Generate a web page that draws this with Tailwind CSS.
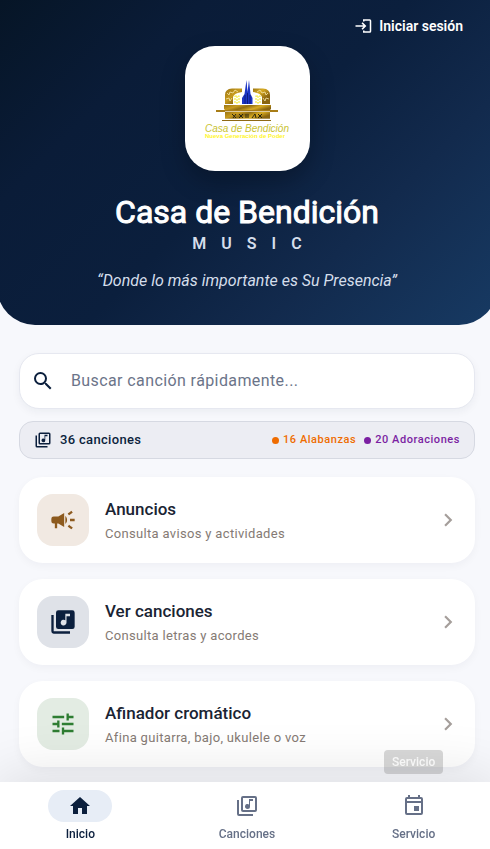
<!DOCTYPE html>
<html lang="es">
<head>
    <meta charset="UTF-8">
    <meta name="viewport" content="width=device-width, initial-scale=1.0">
    <title>Casa de Bendición Music</title>
    <script src="https://cdn.jsdelivr.net/npm/@tailwindcss/browser@4"></script>
</head>
<body class="bg-[#f7f8fc] font-['Roboto',sans-serif] overflow-x-clip">
    <div class="-ml-[3px] -mr-[7px] min-h-screen flex flex-col">
        <header class="flex flex-col items-center rounded-b-[38px] bg-linear-[135deg,#061526_0%,#0a1c38_25%,#0b1f3d_50%,#122a4d_72%,#173a63_100%] pt-3.5 pb-[34px] text-white">
            <button type="button" class="self-end mr-[34px] mb-2 h-6 flex items-center gap-[7px] text-sm font-semibold">
                <svg class="size-[18px]" viewBox="0 0 24 24" fill="currentColor"><path d="M12 3h9a2 2 0 0 1 2 2v14a2 2 0 0 1-2 2h-9v-3h2v1h7V5h-7v1h-2z"/><path d="M11.500 7 10 8.500l2.500 2.500H2v2h10.500L10 15.500l1.500 1.500 5-5z"/></svg>
                Iniciar sesión
            </button>
            <div class="size-[125px] rounded-[30px] bg-white shadow-[0_10px_24px_rgba(0,0,0,0.25)] flex items-center justify-center">
                <svg class="w-[94px] h-[66px]" viewBox="0 0 94 66">
                    <defs>
                        <linearGradient id="gold" x1="0" x2="1" y1="0" y2="0.4">
                            <stop offset="0" stop-color="#9a7413"/>
                            <stop offset="0.3" stop-color="#c79a1d"/>
                            <stop offset="0.5" stop-color="#8f6c10"/>
                            <stop offset="0.75" stop-color="#d8ab22"/>
                            <stop offset="1" stop-color="#8a6510"/>
                        </linearGradient>
                    </defs>
                    <path d="M25 28V19Q25 13 32 12.500H42V16Q34 17 33 21V28ZM70 28V19Q70 13 63 12.500H53V16Q61 17 62 21V28Z" fill="url(#gold)"/>
                    <path d="M27 17l2 2 1-3 3 1 2-3 3 2M26 23l3-1 1 3 2-3M68 17l-2 2-1-3-3 1-2-3-3 2M69 23l-3-1-1 3-2-3" fill="none" stroke="#f5e6ac" stroke-width="0.800"/>
                    <path d="M35 20h4v7h-4zM37 20v7M56 20h4v7h-4zM58 20v7" fill="none" stroke="#f6ee45" stroke-width="1.200" stroke-dasharray="2 1"/>
                    <path d="M42 28V22L44.500 18 46.500 4l1 12L49 4l1.500 14 2 4v6z" fill="#1c35c4"/>
                    <path d="M45 28v-9M50 28v-9M47.500 28V17" stroke="#0a166e" stroke-width="0.800"/>
                    <path d="M24 29h47v4l-2 2H26l-2-2z" fill="url(#gold)"/>
                    <path d="M16 34h62v2H16z" fill="#a87d17"/>
                    <path d="M25 36h45v7H25z" fill="url(#gold)"/>
                    <path d="M25 35.500h45M23 43h49" stroke="#fff" stroke-width="0.600"/>
                    <path d="M22 44h49v1H22z" fill="#8e6914"/>
                    <path d="M32 38l4 4m0-4-3 4M39 38l4 4m0-4-4 4M46 38v4m2-4v4M52 42l3-4 1 4M58 38l4 4m0-4-4 4" fill="none" stroke="#29260f" stroke-width="1"/>
                    <text x="5" y="56" font-family="Liberation Sans, sans-serif" font-style="italic" font-size="10" fill="#c9c232">Casa de Bendición</text>
                    <text x="5" y="62" font-family="Liberation Sans, sans-serif" font-size="6" font-weight="bold" fill="#fff62c">Nueva Generación de Poder</text>
                </svg>
            </div>
            <h1 class="mt-[21px] text-[32px] leading-10 font-normal [-webkit-text-stroke:1px]">Casa de Bendición</h1>
            <p class="mt-px pl-[15px] text-base leading-[22px] font-semibold tracking-[15px] text-[#d5deeb]">MUSIC</p>
            <p class="mt-4 text-base leading-5 italic text-[#d5deeb]">“Donde lo más importante es Su Presencia”</p>
        </header>

        <main class="flex-1 flex flex-col px-[22px] pt-7 pb-[15px]">
            <label class="flex items-center gap-4 h-14 rounded-[20px] bg-white border border-[#e6e8f0] px-[11px] shadow-[0_3px_8px_rgba(11,31,61,0.05)]">
                <svg class="size-6 text-[#0b1f3d]" viewBox="0 0 24 24" fill="currentColor"><path d="M15.500 14h-.79l-.28-.27A6.470 6.470 0 0 0 16 9.500 6.500 6.500 0 1 0 9.500 16c1.610 0 3.090-.59 4.230-1.570l.27.28v.79l5 4.990L20.490 19l-4.990-5zm-6 0a4.500 4.500 0 1 1 0-9 4.500 4.500 0 0 1 0 9z"/></svg>
                <input type="text" aria-label="Buscar canción" placeholder="Buscar canción rápidamente..." class="flex-1 min-w-0 text-base tracking-wide outline-none placeholder:text-[#6b7489]">
            </label>

            <section class="mt-3 h-[38px] flex items-center rounded-[14px] bg-[#ecedf3] border border-[#d6d9e2] px-3.5">
                <svg class="size-[18px] mr-2 text-[#0b1f3d]" viewBox="0 0 24 24" fill="currentColor"><path d="M20 2H8a2 2 0 0 0-2 2v12a2 2 0 0 0 2 2h12a2 2 0 0 0 2-2V4a2 2 0 0 0-2-2zm0 14H8V4h12v12zm-7.500-1a2.500 2.500 0 0 0 2.500-2.500V7h3V5h-4v5.510A2.500 2.500 0 1 0 12.500 15zM4 6H2v14a2 2 0 0 0 2 2h14v-2H4V6z"/></svg>
                <span class="flex-1 text-[13px] font-medium tracking-wide text-[#0b1f3d]">36 canciones</span>
                <span class="flex items-center gap-1 text-[11px] font-medium tracking-wider text-[#ef6c00]"><i class="size-[7px] rounded-full bg-[#ef6c00]"></i>16 Alabanzas</span>
                <span class="ml-2 flex items-center gap-1 text-[11px] font-medium tracking-wider text-[#7b1fa2]"><i class="size-[7px] rounded-full bg-[#7b1fa2]"></i>20 Adoraciones</span>
            </section>

            <div class="mt-[18px] flex flex-col gap-4">
                <a href="#anuncios" class="flex items-center gap-4 rounded-3xl bg-white py-[17px] pl-[18px] pr-3.5 shadow-[0_3px_8px_rgba(11,31,61,0.04)]">
                    <span class="size-[52px] rounded-2xl bg-[#f1e9e2] text-[#8d5a1e] flex items-center justify-center">
                        <svg class="size-7" viewBox="0 0 24 24" fill="currentColor"><path d="M18 11v2h4v-2h-4zm-2 6.610c.96.71 2.210 1.650 3.200 2.390.4-.53.8-1.070 1.200-1.600-.99-.74-2.240-1.680-3.200-2.400-.4.540-.8 1.080-1.200 1.610zM20.400 5.600c-.4-.53-.8-1.070-1.200-1.600-.99.740-2.240 1.680-3.200 2.400.4.530.8 1.070 1.200 1.600.96-.72 2.210-1.650 3.200-2.400zM4 9a2 2 0 0 0-2 2v2a2 2 0 0 0 2 2h1v4h2v-4h1l5 3V6L8 9H4zm11.500 3c0-1.330-.58-2.530-1.500-3.350v6.690c.92-.81 1.500-2.010 1.500-3.340z"/></svg>
                    </span>
                    <span class="flex-1">
                        <span class="block text-[17px] leading-[26px] font-medium text-[#1a2433]">Anuncios</span>
                        <span class="block mt-0.5 text-[13px] leading-5 tracking-wide text-[#857a74]">Consulta avisos y actividades</span>
                    </span>
                    <svg class="size-[26px] text-[#a59e9b]" viewBox="0 0 24 24" fill="currentColor"><path d="M10 6 8.590 7.410 13.170 12l-4.580 4.590L10 18l6-6z"/></svg>
                </a>
                <a href="#canciones" class="flex items-center gap-4 rounded-3xl bg-white py-[17px] pl-[18px] pr-3.5 shadow-[0_3px_8px_rgba(11,31,61,0.04)]">
                    <span class="size-[52px] rounded-2xl bg-[#dfe2e8] text-[#0b1f3d] flex items-center justify-center">
                        <svg class="size-7" viewBox="0 0 24 24" fill="currentColor"><path d="M20 2H8a2 2 0 0 0-2 2v12a2 2 0 0 0 2 2h12a2 2 0 0 0 2-2V4a2 2 0 0 0-2-2zm-2 5h-3v5.500a2.500 2.500 0 1 1-1-1.990V5h4v2zM4 6H2v14a2 2 0 0 0 2 2h14v-2H4V6z"/></svg>
                    </span>
                    <span class="flex-1">
                        <span class="block text-[17px] leading-[26px] font-medium text-[#1a2433]">Ver canciones</span>
                        <span class="block mt-0.5 text-[13px] leading-5 tracking-wide text-[#857a74]">Consulta letras y acordes</span>
                    </span>
                    <svg class="size-[26px] text-[#a59e9b]" viewBox="0 0 24 24" fill="currentColor"><path d="M10 6 8.590 7.410 13.170 12l-4.580 4.590L10 18l6-6z"/></svg>
                </a>
                <a href="#afinador" class="flex items-center gap-4 rounded-3xl bg-white py-[17px] pl-[18px] pr-3.5 shadow-[0_3px_8px_rgba(11,31,61,0.04)]">
                    <span class="size-[52px] rounded-2xl bg-[#e3ece3] text-[#2e7d32] flex items-center justify-center">
                        <svg class="size-7" viewBox="0 0 24 24" fill="currentColor"><path d="M3 17v2h6v-2H3zM3 5v2h10V5H3zm10 16v-2h8v-2h-8v-2h-2v6h2zM7 9v2H3v2h4v2h2V9H7zm14 4v-2H11v2h10zm-6-4h2V7h4V5h-4V3h-2v6z"/></svg>
                    </span>
                    <span class="flex-1">
                        <span class="block text-[17px] leading-[26px] font-medium text-[#1a2433]">Afinador cromático</span>
                        <span class="block mt-0.5 text-[13px] leading-5 tracking-wide text-[#857a74]">Afina guitarra, bajo, ukulele o voz</span>
                    </span>
                    <svg class="size-[26px] text-[#a59e9b]" viewBox="0 0 24 24" fill="currentColor"><path d="M10 6 8.590 7.410 13.170 12l-4.580 4.590L10 18l6-6z"/></svg>
                </a>
            </div>
        </main>

        <nav class="sticky bottom-0 grid grid-cols-3 bg-white pt-2 pb-[7px] text-xs leading-4 font-medium text-[#667087] shadow-[0_-4px_60px_rgba(0,0,0,0.12)]">
            <a href="#inicio" class="flex flex-col items-center gap-1 text-[#0b1f3d]">
                <span class="w-16 h-8 rounded-full bg-[#e7edf6] flex items-center justify-center">
                    <svg class="size-6" viewBox="0 0 24 24" fill="currentColor"><path d="M10 20v-6h4v6h5v-8h3L12 3 2 12h3v8z"/></svg>
                </span>
                Inicio
            </a>
            <a href="#lista" class="flex flex-col items-center gap-1">
                <span class="w-16 h-8 flex items-center justify-center">
                    <svg class="size-6" viewBox="0 0 24 24" fill="currentColor"><path d="M20 2H8a2 2 0 0 0-2 2v12a2 2 0 0 0 2 2h12a2 2 0 0 0 2-2V4a2 2 0 0 0-2-2zm0 14H8V4h12v12zm-7.500-1a2.500 2.500 0 0 0 2.500-2.500V7h3V5h-4v5.510A2.500 2.500 0 1 0 12.500 15zM4 6H2v14a2 2 0 0 0 2 2h14v-2H4V6z"/></svg>
                </span>
                Canciones
            </a>
            <a href="#servicio" class="relative flex flex-col items-center gap-1">
                <span role="tooltip" class="absolute -top-10 rounded bg-[#616161]/25 px-2 py-1 text-white/80">Servicio</span>
                <span class="w-16 h-8 flex items-center justify-center">
                    <svg class="size-6" viewBox="0 0 24 24" fill="currentColor"><path fill-rule="evenodd" d="M16 1v2H8V1H6v2H5a2 2 0 0 0-2 2v14a2 2 0 0 0 2 2h14a2 2 0 0 0 2-2V5a2 2 0 0 0-2-2h-1V1h-2zM5 5h14v2H5V5zm0 4h14v10H5V9z"/><path d="M12 12h5v5h-5z"/></svg>
                </span>
                Servicio
            </a>
        </nav>
    </div>
</body>
</html>
